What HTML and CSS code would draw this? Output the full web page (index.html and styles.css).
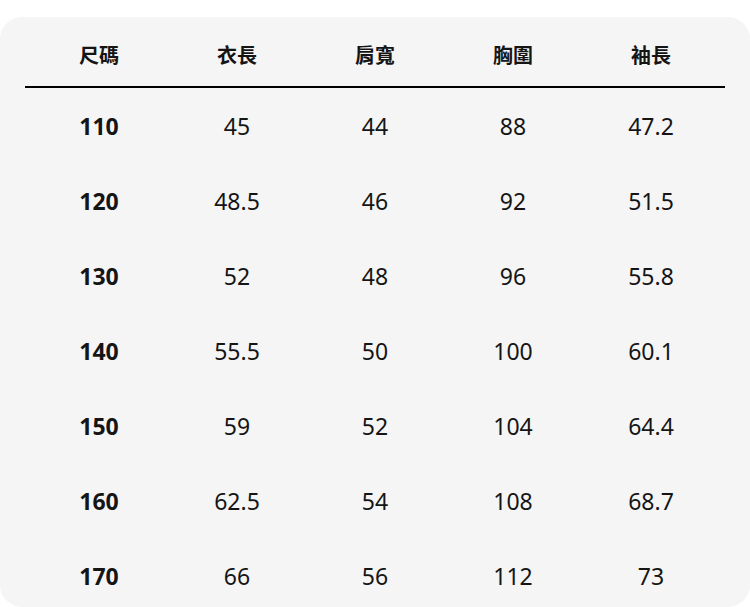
FILE: index.html
```html
<!DOCTYPE html>
<html lang="zh-Hant">
<head>
<meta charset="utf-8">
<title>尺碼表</title>
<link rel="stylesheet" href="styles.css">
</head>
<body>
<div class="card">
  <div class="table">
    <div class="row head">
      <div class="cell">尺碼</div>
      <div class="cell">衣長</div>
      <div class="cell">肩寬</div>
      <div class="cell">胸圍</div>
      <div class="cell">袖長</div>
    </div>
    <div class="row"><div class="cell size">110</div><div class="cell">45</div><div class="cell">44</div><div class="cell">88</div><div class="cell">47.2</div></div>
    <div class="row"><div class="cell size">120</div><div class="cell">48.5</div><div class="cell">46</div><div class="cell">92</div><div class="cell">51.5</div></div>
    <div class="row"><div class="cell size">130</div><div class="cell">52</div><div class="cell">48</div><div class="cell">96</div><div class="cell">55.8</div></div>
    <div class="row"><div class="cell size">140</div><div class="cell">55.5</div><div class="cell">50</div><div class="cell">100</div><div class="cell">60.1</div></div>
    <div class="row"><div class="cell size">150</div><div class="cell">59</div><div class="cell">52</div><div class="cell">104</div><div class="cell">64.4</div></div>
    <div class="row"><div class="cell size">160</div><div class="cell">62.5</div><div class="cell">54</div><div class="cell">108</div><div class="cell">68.7</div></div>
    <div class="row"><div class="cell size">170</div><div class="cell">66</div><div class="cell">56</div><div class="cell">112</div><div class="cell">73</div></div>
  </div>
</div>
</body>
</html>
```
FILE: styles.css
```css
html, body {
  margin: 0;
  padding: 0;
  background: #ffffff;
}
body {
  font-family: "Noto Sans", "Noto Sans CJK TC", sans-serif;
  color: #151515;
}
.card {
  margin-top: 17px;
  height: 590px;
  background: #f5f5f5;
  border-radius: 22px;
  padding: 0 25px;
  box-sizing: border-box;
  overflow: hidden;
}
.table {
  display: flex;
  flex-direction: column;
}
.row {
  display: grid;
  grid-template-columns: repeat(5, 1fr);
  padding: 0 5px;
  height: 75px;
  align-items: center;
  font-size: 23px;
  font-weight: 400;
}
.row.head {
  height: 69px;
  border-bottom: 2px solid #000;
  font-family: "Noto Sans CJK TC", sans-serif;
  font-size: 20px;
  font-weight: 700;
  align-items: start;
}
.row.head .cell {
  padding-top: 24px;
  line-height: 28px;
}
.cell {
  text-align: center;
  line-height: 30px;
}
.cell.size {
  font-weight: 700;
}
```
